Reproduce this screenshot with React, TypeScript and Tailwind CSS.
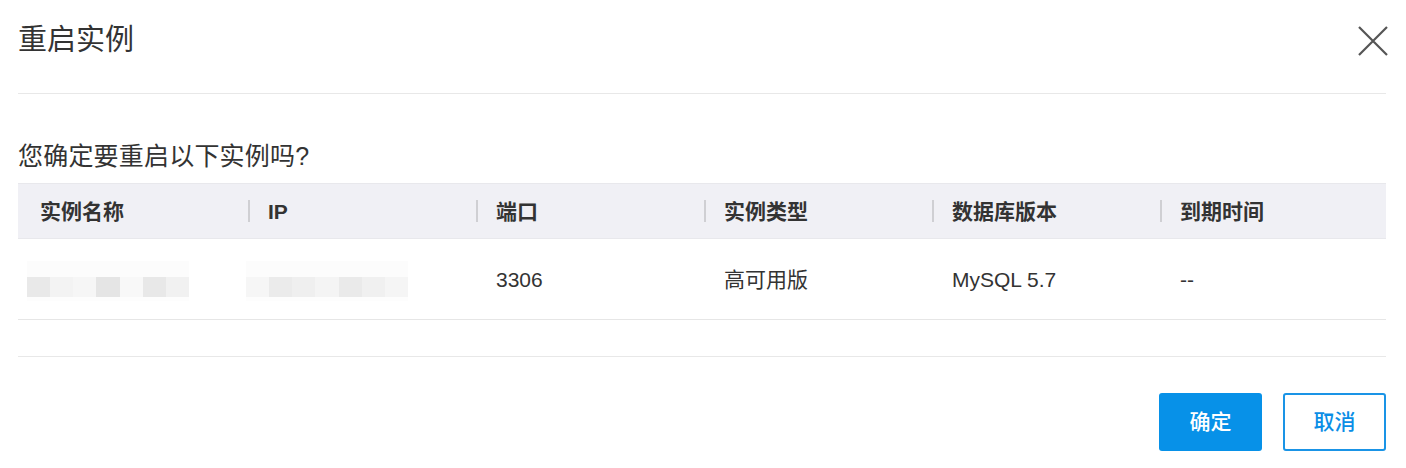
const cjk = { fontFamily: '"Liberation Sans", "Noto Sans CJK SC", sans-serif' };

const columns = ["实例名称", "IP", "端口", "实例类型", "数据库版本", "到期时间"];

const Masked = ({ shades }: { shades: string[] }) => {
  return (
    <div className="flex h-[40px] w-[162px] flex-col bg-[#fbfbfb] blur-[0.6px]">
      <div className="h-[16px] bg-[#fcfcfc]" />
      <div className="flex h-[20px]">
        {shades.map((c, i) => (
          <div key={i} className="h-full flex-1" style={{ backgroundColor: c }} />
        ))}
      </div>
      <div className="h-[4px] bg-[#fdfdfd]" />
    </div>
  );
};

const App = () => {
  return (
    <div className="w-[1406px] bg-white pl-[18px] pr-[20px] text-[#333]" style={cjk}>
      <div className="flex h-[94px] items-start justify-between border-b border-[#e8e8e8] pt-[26px]">
        <h1 className="text-[29px] font-normal leading-none text-[#333]">重启实例</h1>
        <svg width="32" height="32" viewBox="0 0 32 32" className="-mr-[2px] mt-[-2px]">
          <path d="M3 3 L31 31 M31 3 L3 31" stroke="#555" strokeWidth="2.2" />
        </svg>
      </div>

      <p className="mt-[50px] mb-[14px] text-[25px] leading-none tracking-[0.2px] text-[#333]">
        您确定要重启以下实例吗?
      </p>

      <div className="w-full">
        <div className="grid h-[56px] grid-cols-6 border-y border-[#e8e8ec] bg-[#f0f0f5]">
          {columns.map((c, i) => (
            <div key={c} className={`flex items-center ${i === 0 ? "pl-[22px]" : "pl-[2px]"}`}>
              {i > 0 && <span className="mr-[18px] h-[22px] w-[2px] bg-[#cfcfd3]" />}
              <span className="text-[21px] font-bold leading-none text-[#333]">{c}</span>
            </div>
          ))}
        </div>
        <div className="grid h-[81px] grid-cols-6 border-b border-[#e6e6e6] text-[21px] leading-none">
          <div className="flex items-center pl-[9px] pt-[4px]">
            <Masked shades={["#e9e9e9", "#f3f3f3", "#f6f6f6", "#e5e5e5", "#f8f8f8", "#e8e8e8", "#f1f1f1"]} />
          </div>
          <div className="flex items-center pl-[0px] pt-[4px]">
            <Masked shades={["#f6f6f6", "#ebebeb", "#efefef", "#f4f4f4", "#eaeaea", "#f0f0f0", "#f5f5f5"]} />
          </div>
          <div className="flex items-center pl-[22px]">3306</div>
          <div className="flex items-center pl-[22px]">高可用版</div>
          <div className="flex items-center pl-[22px]">MySQL 5.7</div>
          <div className="flex items-center pl-[22px]">--</div>
        </div>
      </div>

      <div className="mt-[36px] border-t border-[#e8e8e8]" />

      <div className="flex h-[111px] items-start justify-end gap-[21px] pt-[36px]">
        <button className="flex h-[58px] w-[103px] items-center justify-center rounded-[3px] bg-[#0791e8] text-[21px] font-medium text-white">
          确定
        </button>
        <button className="flex h-[58px] w-[103px] items-center justify-center rounded-[3px] border-2 border-[#1a94e6] bg-white text-[21px] font-medium text-[#0a8ee6]">
          取消
        </button>
      </div>
    </div>
  );
};

export default App;
